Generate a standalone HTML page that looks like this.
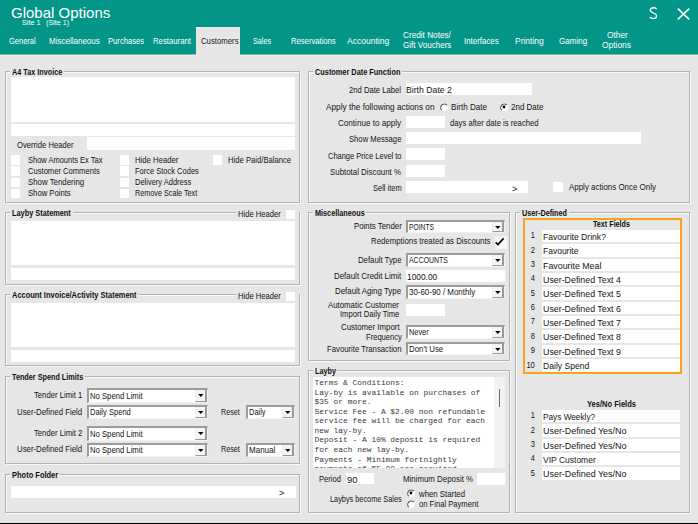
<!DOCTYPE html>
<html><head><meta charset="utf-8"><style>
html,body{margin:0;padding:0;}
body{width:698px;height:524px;overflow:hidden;position:relative;background:#e6e6e6;font-family:'Liberation Sans', sans-serif;}
body>div,body>svg,body>div>div{position:absolute;}
</style></head><body>
<div style="left:0px;top:0px;width:698px;height:54px;background:#029588;"></div>
<div style="left:0px;top:54px;width:698px;height:1px;background:#74bcb6;"></div>
<div style="left:0px;top:55px;width:698px;height:1px;background:#ece9e9;"></div>
<div style="left:10.70px;transform-origin:left center;top:6.27px;font-size:14.5px;line-height:14.5px;color:#fff;font-family:'Liberation Sans', sans-serif;transform:scaleX(1.0353);white-space:pre;">Global Options</div>
<div style="left:21.50px;transform-origin:left center;top:19.42px;font-size:7px;line-height:7px;color:#fff;font-family:'Liberation Sans', sans-serif;transform:scaleX(1.0279);white-space:pre;">Site 1</div>
<div style="left:46.40px;transform-origin:left center;top:19.42px;font-size:7px;line-height:7px;color:#fff;font-family:'Liberation Sans', sans-serif;transform:scaleX(1.0283);white-space:pre;">(Site 1)</div>
<svg style="left:648.8px;top:6.9px;" width="10" height="13"><path d="M7.6,2.0 C6.7,1.1 5.5,0.75 4.3,0.75 C2.4,0.75 1.25,1.8 1.25,3.3 C1.25,6.4 7.6,5.6 7.6,8.9 C7.6,10.5 6.3,11.5 4.3,11.5 C2.9,11.5 1.6,11.1 0.7,10.3" stroke="#fff" stroke-width="1.3" fill="none"/></svg>
<svg style="left:677px;top:8px;" width="13" height="12"><path d="M0.8,0.6 L12.2,11.4 M12.2,0.6 L0.8,11.4" stroke="#fff" stroke-width="1.5"/></svg>
<div style="left:196px;top:27px;width:44px;height:27px;background:#e6e6e6;"></div>
<div style="left:196px;top:54px;width:44px;height:2px;background:#e6e6e6;"></div>
<div style="left:8.60px;transform-origin:left center;top:35.77px;font-size:9.5px;line-height:9.5px;color:#fff;font-family:'Liberation Sans', sans-serif;transform:scaleX(0.7900);white-space:pre;">General</div>
<div style="left:48.60px;transform-origin:left center;top:35.77px;font-size:9.5px;line-height:9.5px;color:#fff;font-family:'Liberation Sans', sans-serif;transform:scaleX(0.8439);white-space:pre;">Miscellaneous</div>
<div style="left:107.70px;transform-origin:left center;top:35.77px;font-size:9.5px;line-height:9.5px;color:#fff;font-family:'Liberation Sans', sans-serif;transform:scaleX(0.8043);white-space:pre;">Purchases</div>
<div style="left:153.00px;transform-origin:left center;top:35.77px;font-size:9.5px;line-height:9.5px;color:#fff;font-family:'Liberation Sans', sans-serif;transform:scaleX(0.8177);white-space:pre;">Restaurant</div>
<div style="left:201.20px;transform-origin:left center;top:35.77px;font-size:9.5px;line-height:9.5px;color:#1a1a1a;font-family:'Liberation Sans', sans-serif;transform:scaleX(0.8187);white-space:pre;">Customers</div>
<div style="left:253.30px;transform-origin:left center;top:35.77px;font-size:9.5px;line-height:9.5px;color:#fff;font-family:'Liberation Sans', sans-serif;transform:scaleX(0.7575);white-space:pre;">Sales</div>
<div style="left:290.60px;transform-origin:left center;top:35.77px;font-size:9.5px;line-height:9.5px;color:#fff;font-family:'Liberation Sans', sans-serif;transform:scaleX(0.8063);white-space:pre;">Reservations</div>
<div style="left:347.30px;transform-origin:left center;top:35.77px;font-size:9.5px;line-height:9.5px;color:#fff;font-family:'Liberation Sans', sans-serif;transform:scaleX(0.8978);white-space:pre;">Accounting</div>
<div style="left:464.30px;transform-origin:left center;top:35.77px;font-size:9.5px;line-height:9.5px;color:#fff;font-family:'Liberation Sans', sans-serif;transform:scaleX(0.8318);white-space:pre;">Interfaces</div>
<div style="left:515.30px;transform-origin:left center;top:35.77px;font-size:9.5px;line-height:9.5px;color:#fff;font-family:'Liberation Sans', sans-serif;transform:scaleX(0.8910);white-space:pre;">Printing</div>
<div style="left:558.90px;transform-origin:left center;top:35.77px;font-size:9.5px;line-height:9.5px;color:#fff;font-family:'Liberation Sans', sans-serif;transform:scaleX(0.8448);white-space:pre;">Gaming</div>
<div style="left:402.60px;transform-origin:left center;top:29.87px;font-size:9.5px;line-height:9.5px;color:#fff;font-family:'Liberation Sans', sans-serif;transform:scaleX(0.8640);white-space:pre;">Credit Notes/</div>
<div style="left:402.60px;transform-origin:left center;top:40.47px;font-size:9.5px;line-height:9.5px;color:#fff;font-family:'Liberation Sans', sans-serif;transform:scaleX(0.8487);white-space:pre;">Gift Vouchers</div>
<div style="left:606.70px;transform-origin:left center;top:29.87px;font-size:9.5px;line-height:9.5px;color:#fff;font-family:'Liberation Sans', sans-serif;transform:scaleX(0.8797);white-space:pre;">Other</div>
<div style="left:602.40px;transform-origin:left center;top:40.47px;font-size:9.5px;line-height:9.5px;color:#fff;font-family:'Liberation Sans', sans-serif;transform:scaleX(0.8827);white-space:pre;">Options</div>
<div style="left:6px;top:72px;width:293px;height:130px;border:1px solid #f9f9f9;"></div>
<div style="left:5px;top:71px;width:293px;height:130px;border:1px solid #b1b1b1;"></div>
<div style="left:10.3px;top:68px;width:53.7px;height:7px;background:#e6e6e6;"></div>
<div style="left:11.80px;transform-origin:left center;top:67.79px;font-size:8.8px;line-height:8.8px;font-weight:bold;color:#111;font-family:'Liberation Sans', sans-serif;transform:scaleX(0.8236);white-space:pre;">A4 Tax Invoice</div>
<div style="left:11px;top:77px;width:284px;height:44.5px;background:#fff;"></div>
<div style="left:11px;top:124px;width:284px;height:12px;background:#fff;"></div>
<div style="left:16.80px;transform-origin:left center;top:140.89px;font-size:8.8px;line-height:8.8px;color:#141414;font-family:'Liberation Sans', sans-serif;transform:scaleX(0.8689);white-space:pre;">Override Header</div>
<div style="left:87px;top:137.3px;width:208px;height:12.399999999999977px;background:#fff;"></div>
<div style="left:11px;top:155.2px;width:9.3px;height:9.5px;background:#ffffff;"></div>
<div style="left:120px;top:155.2px;width:9.400000000000006px;height:9.5px;background:#ffffff;"></div>
<div style="left:11px;top:166.3px;width:9.3px;height:9.5px;background:#ffffff;"></div>
<div style="left:120px;top:166.3px;width:9.400000000000006px;height:9.5px;background:#ffffff;"></div>
<div style="left:11px;top:177.5px;width:9.3px;height:9.5px;background:#ffffff;"></div>
<div style="left:120px;top:177.5px;width:9.400000000000006px;height:9.5px;background:#ffffff;"></div>
<div style="left:11px;top:188.6px;width:9.3px;height:9.5px;background:#ffffff;"></div>
<div style="left:120px;top:188.6px;width:9.400000000000006px;height:9.5px;background:#ffffff;"></div>
<div style="left:28.00px;transform-origin:left center;top:155.99px;font-size:8.8px;line-height:8.8px;color:#141414;font-family:'Liberation Sans', sans-serif;transform:scaleX(0.8522);white-space:pre;">Show Amounts Ex Tax</div>
<div style="left:28.00px;transform-origin:left center;top:167.09px;font-size:8.8px;line-height:8.8px;color:#141414;font-family:'Liberation Sans', sans-serif;transform:scaleX(0.8640);white-space:pre;">Customer Comments</div>
<div style="left:28.00px;transform-origin:left center;top:177.99px;font-size:8.8px;line-height:8.8px;color:#141414;font-family:'Liberation Sans', sans-serif;transform:scaleX(0.8924);white-space:pre;">Show Tendering</div>
<div style="left:28.00px;transform-origin:left center;top:188.79px;font-size:8.8px;line-height:8.8px;color:#141414;font-family:'Liberation Sans', sans-serif;transform:scaleX(0.8732);white-space:pre;">Show Points</div>
<div style="left:135.10px;transform-origin:left center;top:155.99px;font-size:8.8px;line-height:8.8px;color:#141414;font-family:'Liberation Sans', sans-serif;transform:scaleX(0.8788);white-space:pre;">Hide Header</div>
<div style="left:135.10px;transform-origin:left center;top:167.09px;font-size:8.8px;line-height:8.8px;color:#141414;font-family:'Liberation Sans', sans-serif;transform:scaleX(0.8529);white-space:pre;">Force Stock Codes</div>
<div style="left:135.10px;transform-origin:left center;top:177.99px;font-size:8.8px;line-height:8.8px;color:#141414;font-family:'Liberation Sans', sans-serif;transform:scaleX(0.8513);white-space:pre;">Delivery Address</div>
<div style="left:135.10px;transform-origin:left center;top:188.79px;font-size:8.8px;line-height:8.8px;color:#141414;font-family:'Liberation Sans', sans-serif;transform:scaleX(0.8221);white-space:pre;">Remove Scale Text</div>
<div style="left:212.6px;top:155.2px;width:9.599999999999994px;height:9.5px;background:#ffffff;"></div>
<div style="left:227.90px;transform-origin:left center;top:155.99px;font-size:8.8px;line-height:8.8px;color:#141414;font-family:'Liberation Sans', sans-serif;transform:scaleX(0.8718);white-space:pre;">Hide Paid/Balance</div>
<div style="left:309px;top:72px;width:380px;height:130px;border:1px solid #f9f9f9;"></div>
<div style="left:308px;top:71px;width:380px;height:130px;border:1px solid #b1b1b1;"></div>
<div style="left:313.1px;top:68px;width:88.89999999999998px;height:7px;background:#e6e6e6;"></div>
<div style="left:314.60px;transform-origin:left center;top:67.69px;font-size:8.8px;line-height:8.8px;font-weight:bold;color:#111;font-family:'Liberation Sans', sans-serif;transform:scaleX(0.8360);white-space:pre;">Customer Date Function</div>
<div style="left:349.00px;transform-origin:left center;top:85.69px;font-size:8.8px;line-height:8.8px;color:#141414;font-family:'Liberation Sans', sans-serif;transform:scaleX(0.8714);white-space:pre;">2nd Date Label</div>
<div style="left:405.7px;top:83.2px;width:126.69999999999999px;height:11.399999999999991px;background:#ffffff;"></div>
<div style="left:406.30px;transform-origin:left center;top:84.87px;font-size:9.5px;line-height:9.5px;color:#141414;font-family:'Liberation Sans', sans-serif;transform:scaleX(0.9150);white-space:pre;">Birth Date 2</div>
<div style="left:325.80px;transform-origin:left center;top:102.89px;font-size:8.8px;line-height:8.8px;color:#141414;font-family:'Liberation Sans', sans-serif;transform:scaleX(0.9362);white-space:pre;">Apply the following actions on</div>
<svg style="left:439.8px;top:102.7px;" width="9" height="9" viewBox="0 0 9 9"><circle cx="4" cy="4" r="3.9" fill="#fff"/><path d="M1.75,7.2 A3.45,3.45 0 0 1 7.0,2.1" stroke="#5a5a5a" stroke-width="1.2" fill="none"/></svg>
<div style="left:451.00px;transform-origin:left center;top:102.89px;font-size:8.8px;line-height:8.8px;color:#141414;font-family:'Liberation Sans', sans-serif;transform:scaleX(0.9204);white-space:pre;">Birth Date</div>
<svg style="left:499.8px;top:102.7px;" width="9" height="9" viewBox="0 0 9 9"><circle cx="4" cy="4" r="3.9" fill="#fff"/><path d="M1.75,7.2 A3.45,3.45 0 0 1 7.0,2.1" stroke="#5a5a5a" stroke-width="1.2" fill="none"/><circle cx="4" cy="4" r="1.4" fill="#000"/></svg>
<div style="left:511.00px;transform-origin:left center;top:102.89px;font-size:8.8px;line-height:8.8px;color:#141414;font-family:'Liberation Sans', sans-serif;transform:scaleX(0.9103);white-space:pre;">2nd Date</div>
<div style="left:338.30px;transform-origin:left center;top:118.99px;font-size:8.8px;line-height:8.8px;color:#141414;font-family:'Liberation Sans', sans-serif;transform:scaleX(0.9216);white-space:pre;">Continue to apply</div>
<div style="left:405.7px;top:115.9px;width:39.30000000000001px;height:11.799999999999997px;background:#ffffff;"></div>
<div style="left:450.40px;transform-origin:left center;top:118.99px;font-size:8.8px;line-height:8.8px;color:#141414;font-family:'Liberation Sans', sans-serif;transform:scaleX(0.8753);white-space:pre;">days after date is reached</div>
<div style="left:349.00px;transform-origin:left center;top:135.29px;font-size:8.8px;line-height:8.8px;color:#141414;font-family:'Liberation Sans', sans-serif;transform:scaleX(0.8712);white-space:pre;">Show Message</div>
<div style="left:405.7px;top:131.9px;width:235.8px;height:12.400000000000006px;background:#ffffff;"></div>
<div style="left:327.50px;transform-origin:left center;top:151.79px;font-size:8.8px;line-height:8.8px;color:#141414;font-family:'Liberation Sans', sans-serif;transform:scaleX(0.8492);white-space:pre;">Change Price Level to</div>
<div style="left:405.7px;top:148.2px;width:39.30000000000001px;height:12.300000000000011px;background:#ffffff;"></div>
<div style="left:330.00px;transform-origin:left center;top:167.89px;font-size:8.8px;line-height:8.8px;color:#141414;font-family:'Liberation Sans', sans-serif;transform:scaleX(0.8963);white-space:pre;">Subtotal Discount %</div>
<div style="left:405.7px;top:164.8px;width:39.30000000000001px;height:12.199999999999989px;background:#ffffff;"></div>
<div style="left:372.60px;transform-origin:left center;top:183.99px;font-size:8.8px;line-height:8.8px;color:#141414;font-family:'Liberation Sans', sans-serif;transform:scaleX(0.8538);white-space:pre;">Sell item</div>
<div style="left:405.7px;top:181.3px;width:122.30000000000001px;height:12.0px;background:#ffffff;"></div>
<div style="left:511.80px;transform-origin:left center;top:184.17px;font-size:9.5px;line-height:9.5px;color:#141414;font-family:'Liberation Sans', sans-serif;transform:scaleX(0.9553);white-space:pre;">&gt;</div>
<div style="left:552.8px;top:181.5px;width:10.200000000000045px;height:10.5px;background:#ffffff;"></div>
<div style="left:569.40px;transform-origin:left center;top:182.89px;font-size:8.8px;line-height:8.8px;color:#141414;font-family:'Liberation Sans', sans-serif;transform:scaleX(0.9022);white-space:pre;">Apply actions Once Only</div>
<div style="left:6px;top:213px;width:293px;height:71px;border:1px solid #f9f9f9;"></div>
<div style="left:5px;top:212px;width:293px;height:71px;border:1px solid #b1b1b1;"></div>
<div style="left:10.3px;top:209px;width:62.3px;height:7px;background:#e6e6e6;"></div>
<div style="left:11.80px;transform-origin:left center;top:208.99px;font-size:8.8px;line-height:8.8px;font-weight:bold;color:#111;font-family:'Liberation Sans', sans-serif;transform:scaleX(0.8353);white-space:pre;">Layby Statement</div>
<div style="left:236px;top:209px;width:63px;height:10px;background:#e6e6e6;"></div>
<div style="left:237.70px;transform-origin:left center;top:209.89px;font-size:8.8px;line-height:8.8px;color:#141414;font-family:'Liberation Sans', sans-serif;transform:scaleX(0.8666);white-space:pre;">Hide Header</div>
<div style="left:285.8px;top:210px;width:9.199999999999989px;height:9px;background:#ffffff;"></div>
<div style="left:11px;top:221px;width:284px;height:44px;background:#fff;"></div>
<div style="left:11px;top:268px;width:284px;height:12.399999999999977px;background:#fff;"></div>
<div style="left:6px;top:295px;width:293px;height:70px;border:1px solid #f9f9f9;"></div>
<div style="left:5px;top:294px;width:293px;height:70px;border:1px solid #b1b1b1;"></div>
<div style="left:10.3px;top:291px;width:128.1px;height:7px;background:#e6e6e6;"></div>
<div style="left:11.80px;transform-origin:left center;top:290.99px;font-size:8.8px;line-height:8.8px;font-weight:bold;color:#111;font-family:'Liberation Sans', sans-serif;transform:scaleX(0.8468);white-space:pre;">Account Invoice/Activity Statement</div>
<div style="left:236px;top:290px;width:63px;height:11px;background:#e6e6e6;"></div>
<div style="left:237.70px;transform-origin:left center;top:291.79px;font-size:8.8px;line-height:8.8px;color:#141414;font-family:'Liberation Sans', sans-serif;transform:scaleX(0.8666);white-space:pre;">Hide Header</div>
<div style="left:285.8px;top:291.6px;width:9.199999999999989px;height:9.099999999999966px;background:#ffffff;"></div>
<div style="left:11px;top:303px;width:284px;height:44px;background:#fff;"></div>
<div style="left:11px;top:350px;width:284px;height:12.300000000000011px;background:#fff;"></div>
<div style="left:6px;top:377px;width:293px;height:86px;border:1px solid #f9f9f9;"></div>
<div style="left:5px;top:376px;width:293px;height:86px;border:1px solid #b1b1b1;"></div>
<div style="left:10.3px;top:373px;width:74.7px;height:7px;background:#e6e6e6;"></div>
<div style="left:11.80px;transform-origin:left center;top:372.99px;font-size:8.8px;line-height:8.8px;font-weight:bold;color:#111;font-family:'Liberation Sans', sans-serif;transform:scaleX(0.8246);white-space:pre;">Tender Spend Limits</div>
<div style="left:34.00px;transform-origin:left center;top:391.09px;font-size:8.8px;line-height:8.8px;color:#141414;font-family:'Liberation Sans', sans-serif;transform:scaleX(0.8742);white-space:pre;">Tender Limit 1</div>
<div style="left:87px;top:388px;width:121px;height:15px;background:#fff;box-sizing:border-box;border-top:2px solid #9c9c9c;border-left:2px solid #9c9c9c;border-bottom:1px solid #f2f2f2;border-right:1px solid #f2f2f2;"></div>
<div style="left:195px;top:390px;width:12px;height:12px;background:#f5f5f5;box-sizing:border-box;border-right:2px solid #999;border-bottom:1px solid #999;border-left:1px solid #ececec;"></div>
<svg style="left:198px;top:394px;" width="6" height="4"><path d="M0.1,0.1 L5.5,0.1 L2.8,3.1 Z" fill="#000"/></svg>
<div style="left:90.00px;transform-origin:left center;top:391.69px;font-size:8.8px;line-height:8.8px;color:#141414;font-family:'Liberation Sans', sans-serif;transform:scaleX(0.8746);white-space:pre;">No Spend Limit</div>
<div style="left:17.20px;transform-origin:left center;top:407.89px;font-size:8.8px;line-height:8.8px;color:#141414;font-family:'Liberation Sans', sans-serif;transform:scaleX(0.8877);white-space:pre;">User-Defined Field</div>
<div style="left:87px;top:405px;width:121px;height:14px;background:#fff;box-sizing:border-box;border-top:2px solid #9c9c9c;border-left:2px solid #9c9c9c;border-bottom:1px solid #f2f2f2;border-right:1px solid #f2f2f2;"></div>
<div style="left:195px;top:407px;width:12px;height:11px;background:#f5f5f5;box-sizing:border-box;border-right:2px solid #999;border-bottom:1px solid #999;border-left:1px solid #ececec;"></div>
<svg style="left:198px;top:411px;" width="6" height="4"><path d="M0.1,0.1 L5.5,0.1 L2.8,3.1 Z" fill="#000"/></svg>
<div style="left:90.00px;transform-origin:left center;top:408.19px;font-size:8.8px;line-height:8.8px;color:#141414;font-family:'Liberation Sans', sans-serif;transform:scaleX(0.8601);white-space:pre;">Daily Spend</div>
<div style="left:221.00px;transform-origin:left center;top:407.89px;font-size:8.8px;line-height:8.8px;color:#141414;font-family:'Liberation Sans', sans-serif;transform:scaleX(0.8181);white-space:pre;">Reset</div>
<div style="left:246px;top:405px;width:49px;height:14px;background:#fff;box-sizing:border-box;border-top:2px solid #9c9c9c;border-left:2px solid #9c9c9c;border-bottom:1px solid #f2f2f2;border-right:1px solid #f2f2f2;"></div>
<div style="left:282px;top:407px;width:12px;height:11px;background:#f5f5f5;box-sizing:border-box;border-right:2px solid #999;border-bottom:1px solid #999;border-left:1px solid #ececec;"></div>
<svg style="left:285px;top:411px;" width="6" height="4"><path d="M0.1,0.1 L5.5,0.1 L2.8,3.1 Z" fill="#000"/></svg>
<div style="left:249.00px;transform-origin:left center;top:408.19px;font-size:8.8px;line-height:8.8px;color:#141414;font-family:'Liberation Sans', sans-serif;transform:scaleX(0.8490);white-space:pre;">Daily</div>
<div style="left:34.00px;transform-origin:left center;top:429.39px;font-size:8.8px;line-height:8.8px;color:#141414;font-family:'Liberation Sans', sans-serif;transform:scaleX(0.8742);white-space:pre;">Tender Limit 2</div>
<div style="left:87px;top:426px;width:121px;height:15px;background:#fff;box-sizing:border-box;border-top:2px solid #9c9c9c;border-left:2px solid #9c9c9c;border-bottom:1px solid #f2f2f2;border-right:1px solid #f2f2f2;"></div>
<div style="left:195px;top:428px;width:12px;height:12px;background:#f5f5f5;box-sizing:border-box;border-right:2px solid #999;border-bottom:1px solid #999;border-left:1px solid #ececec;"></div>
<svg style="left:198px;top:432px;" width="6" height="4"><path d="M0.1,0.1 L5.5,0.1 L2.8,3.1 Z" fill="#000"/></svg>
<div style="left:90.00px;transform-origin:left center;top:429.69px;font-size:8.8px;line-height:8.8px;color:#141414;font-family:'Liberation Sans', sans-serif;transform:scaleX(0.8746);white-space:pre;">No Spend Limit</div>
<div style="left:17.20px;transform-origin:left center;top:445.49px;font-size:8.8px;line-height:8.8px;color:#141414;font-family:'Liberation Sans', sans-serif;transform:scaleX(0.8877);white-space:pre;">User-Defined Field</div>
<div style="left:87px;top:443px;width:121px;height:14px;background:#fff;box-sizing:border-box;border-top:2px solid #9c9c9c;border-left:2px solid #9c9c9c;border-bottom:1px solid #f2f2f2;border-right:1px solid #f2f2f2;"></div>
<div style="left:195px;top:445px;width:12px;height:11px;background:#f5f5f5;box-sizing:border-box;border-right:2px solid #999;border-bottom:1px solid #999;border-left:1px solid #ececec;"></div>
<svg style="left:198px;top:449px;" width="6" height="4"><path d="M0.1,0.1 L5.5,0.1 L2.8,3.1 Z" fill="#000"/></svg>
<div style="left:90.00px;transform-origin:left center;top:446.19px;font-size:8.8px;line-height:8.8px;color:#141414;font-family:'Liberation Sans', sans-serif;transform:scaleX(0.8746);white-space:pre;">No Spend Limit</div>
<div style="left:221.00px;transform-origin:left center;top:445.49px;font-size:8.8px;line-height:8.8px;color:#141414;font-family:'Liberation Sans', sans-serif;transform:scaleX(0.8181);white-space:pre;">Reset</div>
<div style="left:246px;top:443px;width:49px;height:14px;background:#fff;box-sizing:border-box;border-top:2px solid #9c9c9c;border-left:2px solid #9c9c9c;border-bottom:1px solid #f2f2f2;border-right:1px solid #f2f2f2;"></div>
<div style="left:282px;top:445px;width:12px;height:11px;background:#f5f5f5;box-sizing:border-box;border-right:2px solid #999;border-bottom:1px solid #999;border-left:1px solid #ececec;"></div>
<svg style="left:285px;top:449px;" width="6" height="4"><path d="M0.1,0.1 L5.5,0.1 L2.8,3.1 Z" fill="#000"/></svg>
<div style="left:249.00px;transform-origin:left center;top:446.19px;font-size:8.8px;line-height:8.8px;color:#141414;font-family:'Liberation Sans', sans-serif;transform:scaleX(0.9116);white-space:pre;">Manual</div>
<div style="left:6px;top:475px;width:293px;height:37px;border:1px solid #f9f9f9;"></div>
<div style="left:5px;top:474px;width:293px;height:37px;border:1px solid #b1b1b1;"></div>
<div style="left:10.3px;top:471px;width:49.7px;height:7px;background:#e6e6e6;"></div>
<div style="left:11.80px;transform-origin:left center;top:470.69px;font-size:8.8px;line-height:8.8px;font-weight:bold;color:#111;font-family:'Liberation Sans', sans-serif;transform:scaleX(0.8517);white-space:pre;">Photo Folder</div>
<div style="left:10.7px;top:486px;width:285.8px;height:12px;background:#fff;"></div>
<div style="left:279.00px;transform-origin:left center;top:488.17px;font-size:9.5px;line-height:9.5px;color:#141414;font-family:'Liberation Sans', sans-serif;transform:scaleX(0.9553);white-space:pre;">&gt;</div>
<div style="left:0px;top:523px;width:698px;height:1px;background:#000;"></div>
<div style="left:309px;top:213px;width:200px;height:147px;border:1px solid #f9f9f9;"></div>
<div style="left:308px;top:212px;width:200px;height:147px;border:1px solid #b1b1b1;"></div>
<div style="left:313.3px;top:209px;width:53.19999999999999px;height:7px;background:#e6e6e6;"></div>
<div style="left:314.80px;transform-origin:left center;top:209.29px;font-size:8.8px;line-height:8.8px;font-weight:bold;color:#111;font-family:'Liberation Sans', sans-serif;transform:scaleX(0.8265);white-space:pre;">Miscellaneous</div>
<div style="left:353.60px;transform-origin:left center;top:222.49px;font-size:8.8px;line-height:8.8px;color:#141414;font-family:'Liberation Sans', sans-serif;transform:scaleX(0.8905);white-space:pre;">Points Tender</div>
<div style="left:406px;top:220px;width:99px;height:13px;background:#fff;box-sizing:border-box;border-top:2px solid #9c9c9c;border-left:2px solid #9c9c9c;border-bottom:1px solid #f2f2f2;border-right:1px solid #f2f2f2;"></div>
<div style="left:492px;top:222px;width:12px;height:10px;background:#f5f5f5;box-sizing:border-box;border-right:2px solid #999;border-bottom:1px solid #999;border-left:1px solid #ececec;"></div>
<svg style="left:495px;top:226px;" width="6" height="4"><path d="M0.1,0.1 L5.5,0.1 L2.8,3.1 Z" fill="#000"/></svg>
<div style="left:409.00px;transform-origin:left center;top:222.69px;font-size:8.8px;line-height:8.8px;color:#141414;font-family:'Liberation Sans', sans-serif;transform:scaleX(0.7665);white-space:pre;">POINTS</div>
<div style="left:370.80px;transform-origin:left center;top:236.99px;font-size:8.8px;line-height:8.8px;color:#141414;font-family:'Liberation Sans', sans-serif;transform:scaleX(0.8887);white-space:pre;">Redemptions treated as Discounts</div>
<div style="left:494.7px;top:236px;width:12.600000000000023px;height:12.900000000000006px;background:#f6f6f6;"></div>
<svg style="left:494px;top:236px;" width="12" height="12"><path d="M1.6,6.4 L3.9,8.6 L9.6,2.4" stroke="#000" stroke-width="1.6" fill="none"/></svg>
<div style="left:357.90px;transform-origin:left center;top:255.69px;font-size:8.8px;line-height:8.8px;color:#141414;font-family:'Liberation Sans', sans-serif;transform:scaleX(0.8828);white-space:pre;">Default Type</div>
<div style="left:406px;top:253px;width:99px;height:14px;background:#fff;box-sizing:border-box;border-top:2px solid #9c9c9c;border-left:2px solid #9c9c9c;border-bottom:1px solid #f2f2f2;border-right:1px solid #f2f2f2;"></div>
<div style="left:492px;top:255px;width:12px;height:11px;background:#f5f5f5;box-sizing:border-box;border-right:2px solid #999;border-bottom:1px solid #999;border-left:1px solid #ececec;"></div>
<svg style="left:495px;top:259px;" width="6" height="4"><path d="M0.1,0.1 L5.5,0.1 L2.8,3.1 Z" fill="#000"/></svg>
<div style="left:409.00px;transform-origin:left center;top:256.19px;font-size:8.8px;line-height:8.8px;color:#141414;font-family:'Liberation Sans', sans-serif;transform:scaleX(0.7881);white-space:pre;">ACCOUNTS</div>
<div style="left:334.20px;transform-origin:left center;top:272.39px;font-size:8.8px;line-height:8.8px;color:#141414;font-family:'Liberation Sans', sans-serif;transform:scaleX(0.8997);white-space:pre;">Default Credit Limit</div>
<div style="left:406px;top:269.5px;width:99.19999999999999px;height:12.5px;background:#ffffff;"></div>
<div style="left:406.80px;transform-origin:left center;top:271.67px;font-size:9.5px;line-height:9.5px;color:#141414;font-family:'Liberation Sans', sans-serif;transform:scaleX(0.8794);white-space:pre;">1000.00</div>
<div style="left:334.90px;transform-origin:left center;top:287.49px;font-size:8.8px;line-height:8.8px;color:#141414;font-family:'Liberation Sans', sans-serif;transform:scaleX(0.8960);white-space:pre;">Default Aging Type</div>
<div style="left:406px;top:285px;width:99px;height:14px;background:#fff;box-sizing:border-box;border-top:2px solid #9c9c9c;border-left:2px solid #9c9c9c;border-bottom:1px solid #f2f2f2;border-right:1px solid #f2f2f2;"></div>
<div style="left:492px;top:287px;width:12px;height:11px;background:#f5f5f5;box-sizing:border-box;border-right:2px solid #999;border-bottom:1px solid #999;border-left:1px solid #ececec;"></div>
<svg style="left:495px;top:291px;" width="6" height="4"><path d="M0.1,0.1 L5.5,0.1 L2.8,3.1 Z" fill="#000"/></svg>
<div style="left:409.00px;transform-origin:left center;top:288.19px;font-size:8.8px;line-height:8.8px;color:#141414;font-family:'Liberation Sans', sans-serif;transform:scaleX(0.9012);white-space:pre;">30-60-90 / Monthly</div>
<div style="left:328.40px;transform-origin:left center;top:301.49px;font-size:8.8px;line-height:8.8px;color:#141414;font-family:'Liberation Sans', sans-serif;transform:scaleX(0.8897);white-space:pre;">Automatic Customer</div>
<div style="left:339.80px;transform-origin:left center;top:309.99px;font-size:8.8px;line-height:8.8px;color:#141414;font-family:'Liberation Sans', sans-serif;transform:scaleX(0.8674);white-space:pre;">Import Daily Time</div>
<div style="left:406.2px;top:304px;width:38.69999999999999px;height:11.5px;background:#ffffff;"></div>
<div style="left:340.70px;transform-origin:left center;top:323.39px;font-size:8.8px;line-height:8.8px;color:#141414;font-family:'Liberation Sans', sans-serif;transform:scaleX(0.8946);white-space:pre;">Customer Import</div>
<div style="left:365.60px;transform-origin:left center;top:332.59px;font-size:8.8px;line-height:8.8px;color:#141414;font-family:'Liberation Sans', sans-serif;transform:scaleX(0.8638);white-space:pre;">Frequency</div>
<div style="left:406px;top:325px;width:99px;height:14px;background:#fff;box-sizing:border-box;border-top:2px solid #9c9c9c;border-left:2px solid #9c9c9c;border-bottom:1px solid #f2f2f2;border-right:1px solid #f2f2f2;"></div>
<div style="left:492px;top:327px;width:12px;height:11px;background:#f5f5f5;box-sizing:border-box;border-right:2px solid #999;border-bottom:1px solid #999;border-left:1px solid #ececec;"></div>
<svg style="left:495px;top:331px;" width="6" height="4"><path d="M0.1,0.1 L5.5,0.1 L2.8,3.1 Z" fill="#000"/></svg>
<div style="left:409.00px;transform-origin:left center;top:328.19px;font-size:8.8px;line-height:8.8px;color:#141414;font-family:'Liberation Sans', sans-serif;transform:scaleX(0.8353);white-space:pre;">Never</div>
<div style="left:326.90px;transform-origin:left center;top:344.89px;font-size:8.8px;line-height:8.8px;color:#141414;font-family:'Liberation Sans', sans-serif;transform:scaleX(0.8803);white-space:pre;">Favourite Transaction</div>
<div style="left:406px;top:342px;width:99px;height:13px;background:#fff;box-sizing:border-box;border-top:2px solid #9c9c9c;border-left:2px solid #9c9c9c;border-bottom:1px solid #f2f2f2;border-right:1px solid #f2f2f2;"></div>
<div style="left:492px;top:344px;width:12px;height:10px;background:#f5f5f5;box-sizing:border-box;border-right:2px solid #999;border-bottom:1px solid #999;border-left:1px solid #ececec;"></div>
<svg style="left:495px;top:348px;" width="6" height="4"><path d="M0.1,0.1 L5.5,0.1 L2.8,3.1 Z" fill="#000"/></svg>
<div style="left:409.00px;transform-origin:left center;top:344.69px;font-size:8.8px;line-height:8.8px;color:#141414;font-family:'Liberation Sans', sans-serif;transform:scaleX(0.8918);white-space:pre;">Don't Use</div>
<div style="left:309px;top:371px;width:200px;height:141px;border:1px solid #f9f9f9;"></div>
<div style="left:308px;top:370px;width:200px;height:141px;border:1px solid #b1b1b1;"></div>
<div style="left:313.1px;top:367px;width:24.399999999999977px;height:7px;background:#e6e6e6;"></div>
<div style="left:314.60px;transform-origin:left center;top:367.49px;font-size:8.8px;line-height:8.8px;font-weight:bold;color:#111;font-family:'Liberation Sans', sans-serif;transform:scaleX(0.8221);white-space:pre;">Layby</div>
<div style="left:313px;top:377px;width:192px;height:90.60000000000002px;background:#fff;"></div>
<div style="left:494px;top:377px;width:11px;height:90.60000000000002px;background:#f4f1f4;"></div>
<div style="left:498.8px;top:389px;width:1.3999999999999773px;height:18px;background:#6a6a6a;"></div>
<div style="left:314.6px;top:377px;width:180px;height:90.6px;overflow:hidden;"><div style="position:absolute;left:0;top:1.14px;font-family:'Liberation Mono', monospace;font-size:7.9px;line-height:9.55px;color:#3a3a3a;white-space:pre;">Terms &amp; Conditions:<br>Lay-by is available on purchases of<br>$35 or more.<br>Service Fee - A $2.00 non refundable<br>service fee will be charged for each<br>new lay-by.<br>Deposit - A 10% deposit is required<br>for each new lay-by.<br>Payments - Minimum fortnightly<br>payments of $5.00 are required</div></div>
<div style="left:319.00px;transform-origin:left center;top:475.39px;font-size:8.8px;line-height:8.8px;color:#141414;font-family:'Liberation Sans', sans-serif;transform:scaleX(0.8612);white-space:pre;">Period</div>
<div style="left:345.9px;top:472.5px;width:28.0px;height:11.899999999999977px;background:#ffffff;"></div>
<div style="left:346.50px;transform-origin:left center;top:474.57px;font-size:9.5px;line-height:9.5px;color:#141414;font-family:'Liberation Sans', sans-serif;transform:scaleX(0.9937);white-space:pre;">90</div>
<div style="left:402.50px;transform-origin:left center;top:475.49px;font-size:8.8px;line-height:8.8px;color:#141414;font-family:'Liberation Sans', sans-serif;transform:scaleX(0.8950);white-space:pre;">Minimum Deposit %</div>
<div style="left:477.1px;top:472.7px;width:27.899999999999977px;height:12.100000000000023px;background:#ffffff;"></div>
<div style="left:329.70px;transform-origin:left center;top:495.19px;font-size:8.8px;line-height:8.8px;color:#141414;font-family:'Liberation Sans', sans-serif;transform:scaleX(0.8331);white-space:pre;">Laybys become Sales</div>
<svg style="left:406.9px;top:489.2px;" width="9" height="9" viewBox="0 0 9 9"><circle cx="4" cy="4" r="3.9" fill="#fff"/><path d="M1.75,7.2 A3.45,3.45 0 0 1 7.0,2.1" stroke="#5a5a5a" stroke-width="1.2" fill="none"/><circle cx="4" cy="4" r="1.4" fill="#000"/></svg>
<div style="left:419.00px;transform-origin:left center;top:489.79px;font-size:8.8px;line-height:8.8px;color:#141414;font-family:'Liberation Sans', sans-serif;transform:scaleX(0.8874);white-space:pre;">when Started</div>
<svg style="left:406.9px;top:499.6px;" width="9" height="9" viewBox="0 0 9 9"><circle cx="4" cy="4" r="3.9" fill="#fff"/><path d="M1.75,7.2 A3.45,3.45 0 0 1 7.0,2.1" stroke="#5a5a5a" stroke-width="1.2" fill="none"/></svg>
<div style="left:419.00px;transform-origin:left center;top:500.49px;font-size:8.8px;line-height:8.8px;color:#141414;font-family:'Liberation Sans', sans-serif;transform:scaleX(0.8663);white-space:pre;">on Final Payment</div>
<div style="left:516px;top:213px;width:173px;height:299px;border:1px solid #f9f9f9;"></div>
<div style="left:515px;top:212px;width:173px;height:299px;border:1px solid #b1b1b1;"></div>
<div style="left:520.2px;top:209px;width:48.39999999999998px;height:7px;background:#e6e6e6;"></div>
<div style="left:521.70px;transform-origin:left center;top:209.19px;font-size:8.8px;line-height:8.8px;font-weight:bold;color:#111;font-family:'Liberation Sans', sans-serif;transform:scaleX(0.8201);white-space:pre;">User-Defined</div>
<div style="left:523px;top:218px;width:159px;height:156px;box-sizing:border-box;border:2px solid #f7a31c;"></div>
<div style="left:592.50px;transform-origin:left center;top:219.69px;font-size:8.8px;line-height:8.8px;font-weight:bold;color:#111;font-family:'Liberation Sans', sans-serif;transform:scaleX(0.8168);white-space:pre;">Text Fields</div>
<div style="left:542px;top:230.0px;width:137.5px;height:12.400000000000006px;background:#fff;"></div>
<div style="left:529.61px;transform-origin:right center;top:231.39px;font-size:8.8px;line-height:8.8px;color:#141414;font-family:'Liberation Sans', sans-serif;transform:scaleX(0.8550);white-space:pre;">1</div>
<div style="left:543.00px;transform-origin:left center;top:231.97px;font-size:9.9px;line-height:9.9px;color:#141414;font-family:'Liberation Sans', sans-serif;transform:scaleX(0.8683);white-space:pre;">Favourite Drink?</div>
<div style="left:542px;top:244.35px;width:137.5px;height:12.400000000000006px;background:#fff;"></div>
<div style="left:529.61px;transform-origin:right center;top:245.74px;font-size:8.8px;line-height:8.8px;color:#141414;font-family:'Liberation Sans', sans-serif;transform:scaleX(0.8550);white-space:pre;">2</div>
<div style="left:543.00px;transform-origin:left center;top:246.32px;font-size:9.9px;line-height:9.9px;color:#141414;font-family:'Liberation Sans', sans-serif;transform:scaleX(0.8600);white-space:pre;">Favourite</div>
<div style="left:542px;top:258.7px;width:137.5px;height:12.399999999999977px;background:#fff;"></div>
<div style="left:529.61px;transform-origin:right center;top:260.09px;font-size:8.8px;line-height:8.8px;color:#141414;font-family:'Liberation Sans', sans-serif;transform:scaleX(0.8550);white-space:pre;">3</div>
<div style="left:543.00px;transform-origin:left center;top:260.67px;font-size:9.9px;line-height:9.9px;color:#141414;font-family:'Liberation Sans', sans-serif;transform:scaleX(0.8942);white-space:pre;">Favourite Meal</div>
<div style="left:542px;top:273.05px;width:137.5px;height:12.399999999999977px;background:#fff;"></div>
<div style="left:529.61px;transform-origin:right center;top:274.44px;font-size:8.8px;line-height:8.8px;color:#141414;font-family:'Liberation Sans', sans-serif;transform:scaleX(0.8550);white-space:pre;">4</div>
<div style="left:543.00px;transform-origin:left center;top:275.02px;font-size:9.9px;line-height:9.9px;color:#141414;font-family:'Liberation Sans', sans-serif;transform:scaleX(0.8950);white-space:pre;">User-Defined Text 4</div>
<div style="left:542px;top:287.4px;width:137.5px;height:12.399999999999977px;background:#fff;"></div>
<div style="left:529.61px;transform-origin:right center;top:288.79px;font-size:8.8px;line-height:8.8px;color:#141414;font-family:'Liberation Sans', sans-serif;transform:scaleX(0.8550);white-space:pre;">5</div>
<div style="left:543.00px;transform-origin:left center;top:289.37px;font-size:9.9px;line-height:9.9px;color:#141414;font-family:'Liberation Sans', sans-serif;transform:scaleX(0.8950);white-space:pre;">User-Defined Text 5</div>
<div style="left:542px;top:301.75px;width:137.5px;height:12.399999999999977px;background:#fff;"></div>
<div style="left:529.61px;transform-origin:right center;top:303.14px;font-size:8.8px;line-height:8.8px;color:#141414;font-family:'Liberation Sans', sans-serif;transform:scaleX(0.8550);white-space:pre;">6</div>
<div style="left:543.00px;transform-origin:left center;top:303.72px;font-size:9.9px;line-height:9.9px;color:#141414;font-family:'Liberation Sans', sans-serif;transform:scaleX(0.8950);white-space:pre;">User-Defined Text 6</div>
<div style="left:542px;top:316.1px;width:137.5px;height:12.399999999999977px;background:#fff;"></div>
<div style="left:529.61px;transform-origin:right center;top:317.49px;font-size:8.8px;line-height:8.8px;color:#141414;font-family:'Liberation Sans', sans-serif;transform:scaleX(0.8550);white-space:pre;">7</div>
<div style="left:543.00px;transform-origin:left center;top:318.07px;font-size:9.9px;line-height:9.9px;color:#141414;font-family:'Liberation Sans', sans-serif;transform:scaleX(0.8950);white-space:pre;">User-Defined Text 7</div>
<div style="left:542px;top:330.45px;width:137.5px;height:12.399999999999977px;background:#fff;"></div>
<div style="left:529.61px;transform-origin:right center;top:331.84px;font-size:8.8px;line-height:8.8px;color:#141414;font-family:'Liberation Sans', sans-serif;transform:scaleX(0.8550);white-space:pre;">8</div>
<div style="left:543.00px;transform-origin:left center;top:332.42px;font-size:9.9px;line-height:9.9px;color:#141414;font-family:'Liberation Sans', sans-serif;transform:scaleX(0.8950);white-space:pre;">User-Defined Text 8</div>
<div style="left:542px;top:344.8px;width:137.5px;height:12.399999999999977px;background:#fff;"></div>
<div style="left:529.61px;transform-origin:right center;top:346.19px;font-size:8.8px;line-height:8.8px;color:#141414;font-family:'Liberation Sans', sans-serif;transform:scaleX(0.8550);white-space:pre;">9</div>
<div style="left:543.00px;transform-origin:left center;top:346.77px;font-size:9.9px;line-height:9.9px;color:#141414;font-family:'Liberation Sans', sans-serif;transform:scaleX(0.8950);white-space:pre;">User-Defined Text 9</div>
<div style="left:542px;top:359.15px;width:137.5px;height:12.399999999999977px;background:#fff;"></div>
<div style="left:524.72px;transform-origin:right center;top:360.54px;font-size:8.8px;line-height:8.8px;color:#141414;font-family:'Liberation Sans', sans-serif;transform:scaleX(0.8550);white-space:pre;">10</div>
<div style="left:543.00px;transform-origin:left center;top:361.12px;font-size:9.9px;line-height:9.9px;color:#141414;font-family:'Liberation Sans', sans-serif;transform:scaleX(0.8714);white-space:pre;">Daily Spend</div>
<div style="left:586.60px;transform-origin:left center;top:399.99px;font-size:8.8px;line-height:8.8px;font-weight:bold;color:#111;font-family:'Liberation Sans', sans-serif;transform:scaleX(0.8566);white-space:pre;">Yes/No Fields</div>
<div style="left:542px;top:410.0px;width:137.5px;height:12.399999999999977px;background:#fff;"></div>
<div style="left:529.61px;transform-origin:right center;top:411.39px;font-size:8.8px;line-height:8.8px;color:#141414;font-family:'Liberation Sans', sans-serif;transform:scaleX(0.8550);white-space:pre;">1</div>
<div style="left:543.00px;transform-origin:left center;top:411.97px;font-size:9.9px;line-height:9.9px;color:#141414;font-family:'Liberation Sans', sans-serif;transform:scaleX(0.8352);white-space:pre;">Pays Weekly?</div>
<div style="left:542px;top:424.35px;width:137.5px;height:12.399999999999977px;background:#fff;"></div>
<div style="left:529.61px;transform-origin:right center;top:425.74px;font-size:8.8px;line-height:8.8px;color:#141414;font-family:'Liberation Sans', sans-serif;transform:scaleX(0.8550);white-space:pre;">2</div>
<div style="left:543.00px;transform-origin:left center;top:426.32px;font-size:9.9px;line-height:9.9px;color:#141414;font-family:'Liberation Sans', sans-serif;transform:scaleX(0.9048);white-space:pre;">User-Defined Yes/No</div>
<div style="left:542px;top:438.7px;width:137.5px;height:12.399999999999977px;background:#fff;"></div>
<div style="left:529.61px;transform-origin:right center;top:440.09px;font-size:8.8px;line-height:8.8px;color:#141414;font-family:'Liberation Sans', sans-serif;transform:scaleX(0.8550);white-space:pre;">3</div>
<div style="left:543.00px;transform-origin:left center;top:440.67px;font-size:9.9px;line-height:9.9px;color:#141414;font-family:'Liberation Sans', sans-serif;transform:scaleX(0.9048);white-space:pre;">User-Defined Yes/No</div>
<div style="left:542px;top:453.05px;width:137.5px;height:12.399999999999977px;background:#fff;"></div>
<div style="left:529.61px;transform-origin:right center;top:454.44px;font-size:8.8px;line-height:8.8px;color:#141414;font-family:'Liberation Sans', sans-serif;transform:scaleX(0.8550);white-space:pre;">4</div>
<div style="left:543.00px;transform-origin:left center;top:455.02px;font-size:9.9px;line-height:9.9px;color:#141414;font-family:'Liberation Sans', sans-serif;transform:scaleX(0.8607);white-space:pre;">VIP Customer</div>
<div style="left:542px;top:467.4px;width:137.5px;height:12.399999999999977px;background:#fff;"></div>
<div style="left:529.61px;transform-origin:right center;top:468.79px;font-size:8.8px;line-height:8.8px;color:#141414;font-family:'Liberation Sans', sans-serif;transform:scaleX(0.8550);white-space:pre;">5</div>
<div style="left:543.00px;transform-origin:left center;top:469.37px;font-size:9.9px;line-height:9.9px;color:#141414;font-family:'Liberation Sans', sans-serif;transform:scaleX(0.9048);white-space:pre;">User-Defined Yes/No</div>
</body></html>
